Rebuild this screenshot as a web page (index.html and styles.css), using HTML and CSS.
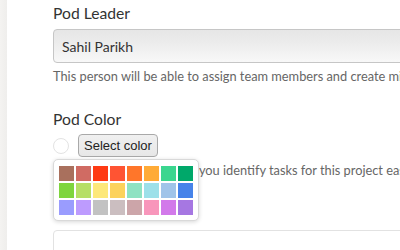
FILE: index.html
```html
<!DOCTYPE html>
<html>
<head>
<meta charset="utf-8">
<link rel="stylesheet" href="styles.css">
</head>
<body>
<div class="page">
  <div class="rail"></div>
  <main class="form">
    <div class="label label-first">Pod Leader</div>
    <div class="input filled">Sahil Parikh</div>
    <p class="help">This person will be able to assign team members and create milestones.</p>
    <div class="label label-second">Pod Color</div>
    <div class="color-field">
      <div class="color-row">
        <span class="dot"></span>
        <button class="btn">Select color</button>
      </div>
      <p class="help">Choosing a color will help you identify tasks for this project easily.</p>
      <div class="palette">
        <span class="sw" style="background:#a9705d"></span>
        <span class="sw" style="background:#d06b63"></span>
        <span class="sw" style="background:#ff3a13"></span>
        <span class="sw" style="background:#ff5433"></span>
        <span class="sw" style="background:#ff762a"></span>
        <span class="sw" style="background:#ffab37"></span>
        <span class="sw" style="background:#3bd68f"></span>
        <span class="sw" style="background:#00a86a"></span>
        <span class="sw" style="background:#7ed53d"></span>
        <span class="sw" style="background:#b6df66"></span>
        <span class="sw" style="background:#fde87a"></span>
        <span class="sw" style="background:#fcd25c"></span>
        <span class="sw" style="background:#8ee2c2"></span>
        <span class="sw" style="background:#9ce0e9"></span>
        <span class="sw" style="background:#a0c4e9"></span>
        <span class="sw" style="background:#4683e9"></span>
        <span class="sw" style="background:#9a9cfe"></span>
        <span class="sw" style="background:#bd9bfe"></span>
        <span class="sw" style="background:#c2c2c2"></span>
        <span class="sw" style="background:#cbbec0"></span>
        <span class="sw" style="background:#cca5a9"></span>
        <span class="sw" style="background:#f896bb"></span>
        <span class="sw" style="background:#d279ea"></span>
        <span class="sw" style="background:#a677e2"></span>
      </div>
    </div>
    <div class="input empty"></div>
  </main>
</div>
</body>
</html>
```

FILE: styles.css
```css
html, body {
  margin: 0;
  padding: 0;
  background: #ffffff;
}

.page {
  display: flex;
  width: 400px;
  height: 250px;
  overflow: hidden;
  font-family: Lato, "Liberation Sans", sans-serif;
}

.rail {
  flex: none;
  width: 7px;
  background: linear-gradient(to right, #f4f3f1, #efeeec);
}

.form {
  flex: none;
  width: 440px;
  padding: 4px 0 0 46px;
  white-space: nowrap;
}

.label {
  font-size: 15.7px;
  line-height: 18px;
  color: #333333;
}

.label-first {
  margin-bottom: 7px;
}

.label-second {
  margin-top: 26px;
  margin-bottom: 6px;
}

.input {
  box-sizing: border-box;
  height: 34px;
  border-radius: 4px;
}

.input.filled {
  display: flex;
  align-items: center;
  padding-left: 8px;
  border: 1px solid #c6c6c6;
  background: linear-gradient(to bottom, #e6e6e6 0%, #ececec 40%, #f8f8f8 100%);
  font-size: 14px;
  color: #333333;
}

.input.empty {
  margin-top: 52px;
  border: 1px solid #e2e2e2;
  background: #ffffff;
}

.help {
  margin: 5px 0 0 0;
  font-size: 12.8px;
  line-height: 16px;
  color: #666666;
}

.color-field {
  position: relative;
}

.color-row {
  display: flex;
  align-items: center;
  gap: 9px;
  height: 23px;
}

.dot {
  box-sizing: border-box;
  width: 16px;
  height: 16px;
  border-radius: 50%;
  border: 1px solid #e3e3e3;
  background: #ffffff;
}

.btn {
  box-sizing: border-box;
  height: 23px;
  padding: 0 5px;
  border: 1px solid #a9a9a9;
  border-radius: 4px;
  background: linear-gradient(to bottom, #f0f0f0, #e7e7e7);
  font-family: "Liberation Sans", Arial, sans-serif;
  font-size: 13px;
  color: #222222;
}

.palette {
  position: absolute;
  left: 0;
  top: 25px;
  display: grid;
  grid-template-columns: repeat(8, 15px);
  grid-auto-rows: 15px;
  gap: 2px;
  padding: 6px 5px 5px 5px;
  border: 1px solid #d9d9d9;
  border-radius: 5px;
  background: #ffffff;
  box-shadow: 0 1px 4px rgba(0, 0, 0, 0.16);
}

.sw {
  display: block;
}
```
